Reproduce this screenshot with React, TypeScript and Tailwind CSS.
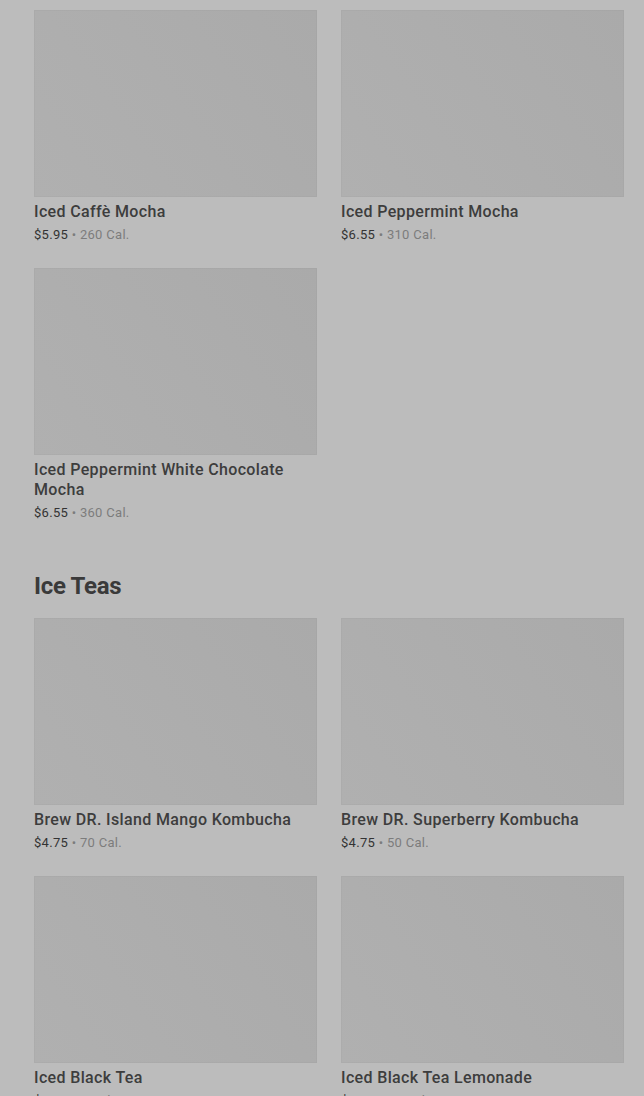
const coffees = [
  { name: "Iced Caffè Mocha", price: "$5.95", cal: "260 Cal." },
  { name: "Iced Peppermint Mocha", price: "$6.55", cal: "310 Cal." },
  { name: "Iced Peppermint White Chocolate Mocha", price: "$6.55", cal: "360 Cal." },
];

const teas = [
  { name: "Brew DR. Island Mango Kombucha", price: "$4.75", cal: "70 Cal." },
  { name: "Brew DR. Superberry Kombucha", price: "$4.75", cal: "50 Cal." },
  { name: "Iced Black Tea", price: "$4.65", cal: "0 Cal." },
  { name: "Iced Black Tea Lemonade", price: "$4.45", cal: "25 Cal." },
];

type Item = { name: string; price: string; cal: string };

function ProductCard({ item }: { item: Item }) {
  return (
    <div className="flex flex-col">
      <div className="h-[187px] bg-[linear-gradient(55deg,#b0b0b0_0%,#adadad_50%,#aaaaaa_100%)] shadow-[inset_0_0_0_1px_rgba(0,0,0,0.02)]" />
      <div className="mt-[5px] text-[16px] leading-5 font-medium tracking-[0.35px] text-[#3d3d3d]">{item.name}</div>
      <div className="mt-[4px] text-[13px] leading-[18px] tracking-[0.3px]">
        <span className="text-[#333333]">{item.price}</span>
        <span className="text-[#7c7c7c]"> • {item.cal}</span>
      </div>
    </div>
  );
}

export default function App() {
  return (
    <div className="min-h-screen bg-[#bcbcbc] pl-[34px] pr-[20px] pt-[10px] font-['Roboto','Liberation_Sans',sans-serif] overflow-hidden h-[1096px]">
      <div className="grid grid-cols-2 gap-x-6 gap-y-[24px]">
        {coffees.map((item) => (
          <ProductCard key={item.name} item={item} />
        ))}
      </div>

      <h2 className="mt-[48px] mb-[16px] text-[24px] leading-8 font-bold tracking-[-0.3px] text-[#3a3a3a]">Ice Teas</h2>

      <div className="grid grid-cols-2 gap-x-6 gap-y-[24px]">
        {teas.map((item) => (
          <ProductCard key={item.name} item={item} />
        ))}
      </div>
    </div>
  );
}
